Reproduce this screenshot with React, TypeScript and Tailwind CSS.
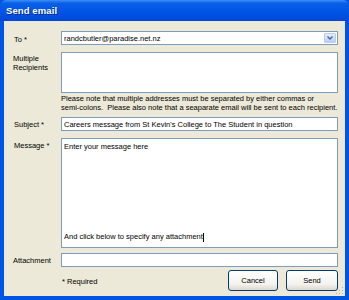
export default function App() {
  const font = "font-['Liberation_Sans',Arial,sans-serif]";
  const btn =
    "h-[21px] rounded-[3px] border border-[#003c74] bg-[linear-gradient(to_bottom,#ffffff,#f3f2ee_70%,#dcd7ce)] text-[7.5px] leading-[9px]";
  return (
    <div className={`w-[349px] h-[300px] flex flex-col bg-[#0054e3] ${font} text-[7.5px] leading-[9px] text-black`}>
      {/* title bar */}
      <div className="h-[21px] shrink-0 flex items-center pl-[6px] rounded-t-[6px] bg-[linear-gradient(to_bottom,#3d8ff5_0%,#0a5fe8_15%,#0054e3_60%,#0047d6_100%)]">
        <span className="text-white font-bold text-[9.5px] tracking-[0.1px] [text-shadow:1px_1px_0_#0a2a8a]">Send email</span>
      </div>
      {/* body */}
      <div className="relative h-[275px] shrink-0 mx-[4px] bg-[#ece9d8] pl-[9px] pr-[7px] pt-[10px] overflow-hidden">
        <div className="grid grid-cols-[48px_277px]">
          <div className="h-[14px] pt-[4px] pl-[1px]">To *</div>
          <div className="h-[14px] bg-white border border-[#7f9db9] flex items-center pl-[2px] pr-[1px]">
            <span className="flex-1">randcbutler@paradise.net.nz</span>
            <span className="w-[12px] h-[10px] rounded-[1px] bg-[linear-gradient(to_bottom,#e4ecfc,#b9cdf5)] border border-[#bccdf5] flex items-center justify-center">
              <svg width="6" height="4" viewBox="0 0 6 4"><path d="M0.5 0.5 L3 3 L5.5 0.5" stroke="#4d6185" strokeWidth="1.3" fill="none" /></svg>
            </span>
          </div>

          <div className="h-[41px] mt-[7px] pt-[2px]">Multiple<br />Recipients</div>
          <div className="h-[41px] mt-[7px] bg-white border border-[#7f9db9]" />

          <div />
          <div className="h-[18px] mt-[1px] pt-[1px] leading-[8.5px] whitespace-nowrap">
            Please note that multiple addresses must be separated by either commas or
            <br />
            semi-colons.&nbsp; Please also note that a seaparate email will be sent to each recipient.
          </div>

          <div className="h-[14px] mt-[5px] pt-[3px] pl-[1px]">Subject *</div>
          <div className="h-[14px] mt-[5px] bg-white border border-[#7f9db9] flex items-center pl-[2px] whitespace-nowrap">
            Careers message from St Kevin's College to The Student in question
          </div>

          <div className="h-[110px] mt-[7px] pt-[3px] pl-[1px]">Message *</div>
          <div className="h-[110px] mt-[7px] bg-white border border-[#7f9db9] flex flex-col justify-between pl-[2px] pt-[3px] pb-[5px]">
            <span>Enter your message here</span>
            <span>And click below to specify any attachment<span className="inline-block w-[1px] h-[9px] bg-black align-middle" /></span>
          </div>

          <div className="h-[14px] mt-[5px] pt-[3px]">Attachment</div>
          <div className="h-[14px] mt-[5px] bg-white border border-[#7f9db9]" />

          <div />
          <div className="h-[21px] mt-[3px] flex items-center">
            <span className="flex-1 pl-[1px] pt-[1px]">* Required</span>
            <button className={`${btn} w-[50px] mr-[8px]`}>Cancel</button>
            <button className={`${btn} w-[52px]`}>Send</button>
          </div>
        </div>
        {/* resize grip */}
        <svg className="absolute right-[1px] bottom-[1px]" width="8" height="8" viewBox="0 0 8 8">
          <g fill="#b5b0a0">
            <rect x="6" y="0" width="1" height="1" />
            <rect x="3" y="3" width="1" height="1" />
            <rect x="6" y="3" width="1" height="1" />
            <rect x="0" y="6" width="1" height="1" />
            <rect x="3" y="6" width="1" height="1" />
            <rect x="6" y="6" width="1" height="1" />
          </g>
        </svg>
      </div>
    </div>
  );
}
